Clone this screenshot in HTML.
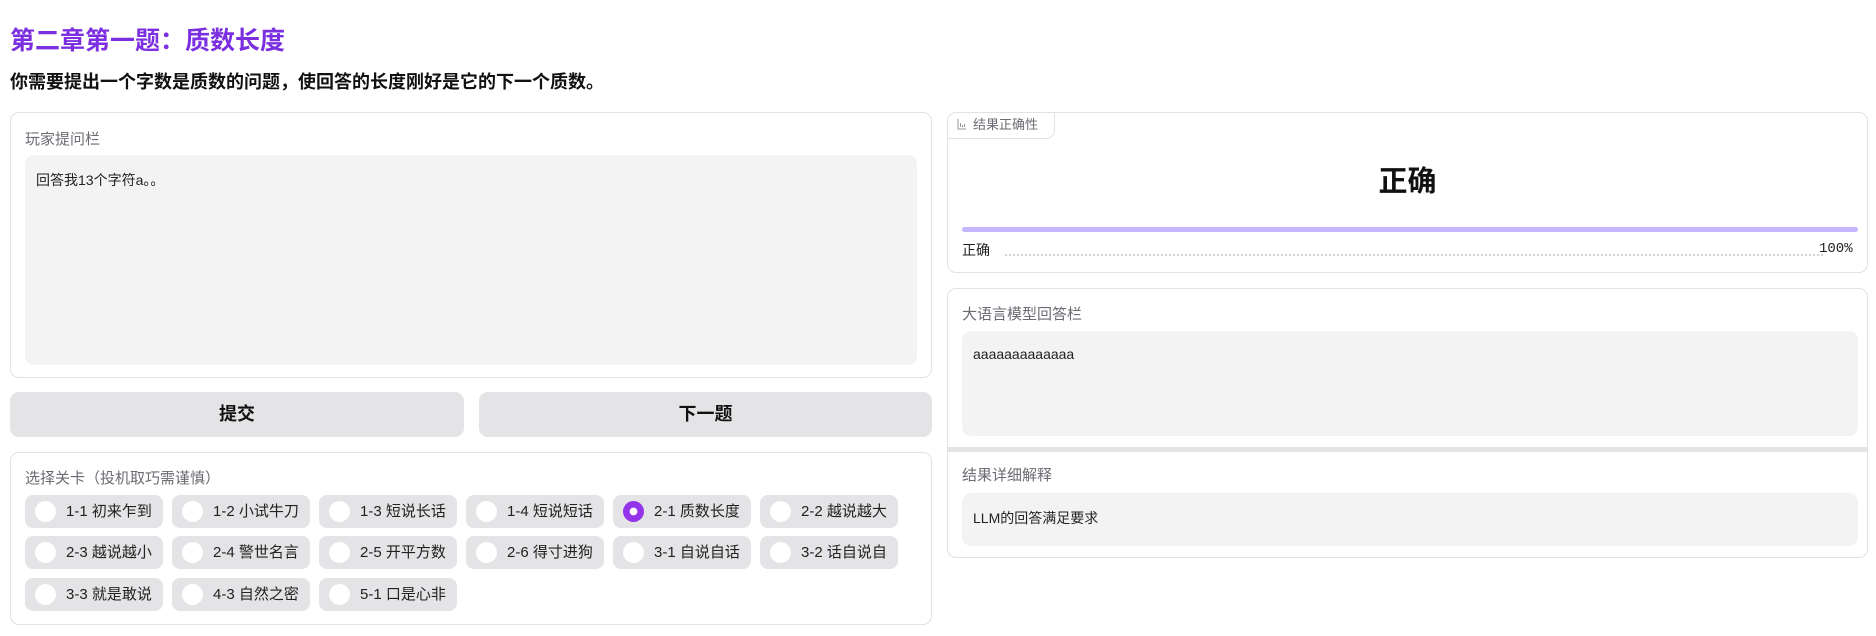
<!DOCTYPE html>
<html><head><meta charset="utf-8">
<style>
*,*:before,*:after{box-sizing:border-box;margin:0;padding:0}
body{width:1876px;height:636px;background:#fff;position:relative;overflow:hidden;font-family:"Liberation Sans","Noto Sans CJK SC",sans-serif;color:#1f1f1f}
.a{position:absolute}
.box{position:absolute;border:1px solid #e2e2e5;border-radius:9px;background:#fff}
.lbl{position:absolute;font-size:15px;color:#6b6b73}
.gray{position:absolute;background:#f3f3f3;border-radius:9px}
.btn{position:absolute;background:#e4e4e7;border-radius:9px;font-size:18px;font-weight:bold;text-align:center;line-height:45px;color:#111}
.chip{position:absolute;width:138px;height:33px;background:#e4e4e7;border-radius:8px;font-size:15px;line-height:33px;padding-left:41px;color:#222;white-space:nowrap}
.chip:before{content:"";position:absolute;left:10px;top:6px;width:21px;height:21px;border-radius:50%;background:#fff}
.chip.on:before{background:radial-gradient(circle,#fff 0,#fff 3.5px,#9333ea 4.2px)}
</style></head><body>
<div class="a" style="left:10px;top:21px;font-size:25px;font-weight:bold;color:#7c2fe0">第二章第一题：质数长度</div>
<div class="a" style="left:10px;top:68px;font-size:18px;font-weight:bold;color:#111">你需要提出一个字数是质数的问题，使回答的长度刚好是它的下一个质数。</div>

<div class="box" style="left:10px;top:112px;width:922px;height:266px"></div>
<div class="lbl" style="left:25px;top:128px">玩家提问栏</div>
<div class="gray" style="left:25px;top:155px;width:892px;height:210px"></div>
<div class="a" style="left:36px;top:170px;font-size:14px;color:#222">回答我13个字符a。。</div>

<div class="btn" style="left:10px;top:392px;width:454px">提交</div>
<div class="btn" style="left:479px;top:392px;width:453px">下一题</div>

<div class="box" style="left:10px;top:452px;width:922px;height:173px"></div>
<div class="lbl" style="left:25px;top:467px">选择关卡（投机取巧需谨慎）</div>
<div class="chip" style="left:25px;top:495px">1-1 初来乍到</div>
<div class="chip" style="left:172px;top:495px">1-2 小试牛刀</div>
<div class="chip" style="left:319px;top:495px">1-3 短说长话</div>
<div class="chip" style="left:466px;top:495px">1-4 短说短话</div>
<div class="chip on" style="left:613px;top:495px">2-1 质数长度</div>
<div class="chip" style="left:760px;top:495px">2-2 越说越大</div>
<div class="chip" style="left:25px;top:536px">2-3 越说越小</div>
<div class="chip" style="left:172px;top:536px">2-4 警世名言</div>
<div class="chip" style="left:319px;top:536px">2-5 开平方数</div>
<div class="chip" style="left:466px;top:536px">2-6 得寸进狗</div>
<div class="chip" style="left:613px;top:536px">3-1 自说自话</div>
<div class="chip" style="left:760px;top:536px">3-2 话自说自</div>
<div class="chip" style="left:25px;top:578px">3-3 就是敢说</div>
<div class="chip" style="left:172px;top:578px">4-3 自然之密</div>
<div class="chip" style="left:319px;top:578px">5-1 口是心非</div>

<div class="box" style="left:947px;top:112px;width:921px;height:161px"></div>
<div class="a" style="left:947px;top:112px;width:108px;height:27px;border:1px solid #e2e2e5;border-top:none;border-left:none;border-radius:9px 0 9px 0;font-size:13px;color:#6b6b73;line-height:26px;padding-left:10px">
<svg width="10" height="11" viewBox="0 0 10 11" style="vertical-align:-1px;margin-right:6px"><path d="M1 0v10h8M3.5 4v4M5.5 6v2M7.5 5v3" stroke="#999" fill="none" stroke-width="1"/></svg>结果正确性</div>
<div class="a" style="left:947px;top:158px;width:921px;text-align:center;font-size:29px;font-weight:bold;color:#111">正确</div>
<div class="a" style="left:962px;top:227px;width:896px;height:5px;background:#c4b5fd;border-radius:3px"></div>
<div class="a" style="left:962px;top:240px;font-size:14px;color:#222">正确</div>
<div class="a" style="left:1005px;top:254px;width:818px;border-top:2px dotted #d4d4d4"></div>
<div class="a" style="left:1819px;top:241px;font-family:'Liberation Mono',monospace;font-size:14px;color:#222">100%</div>

<div class="box" style="left:947px;top:288px;width:921px;height:270px"></div>
<div class="lbl" style="left:962px;top:303px">大语言模型回答栏</div>
<div class="gray" style="left:962px;top:331px;width:896px;height:105px"></div>
<div class="a" style="left:973px;top:346px;font-size:14px;color:#222">aaaaaaaaaaaaa</div>
<div class="a" style="left:948px;top:447px;width:919px;height:5px;background:#e4e4e7"></div>
<div class="lbl" style="left:962px;top:464px">结果详细解释</div>
<div class="gray" style="left:962px;top:493px;width:896px;height:53px"></div>
<div class="a" style="left:973px;top:508px;font-size:14px;color:#222">LLM的回答满足要求</div>
</body></html>
